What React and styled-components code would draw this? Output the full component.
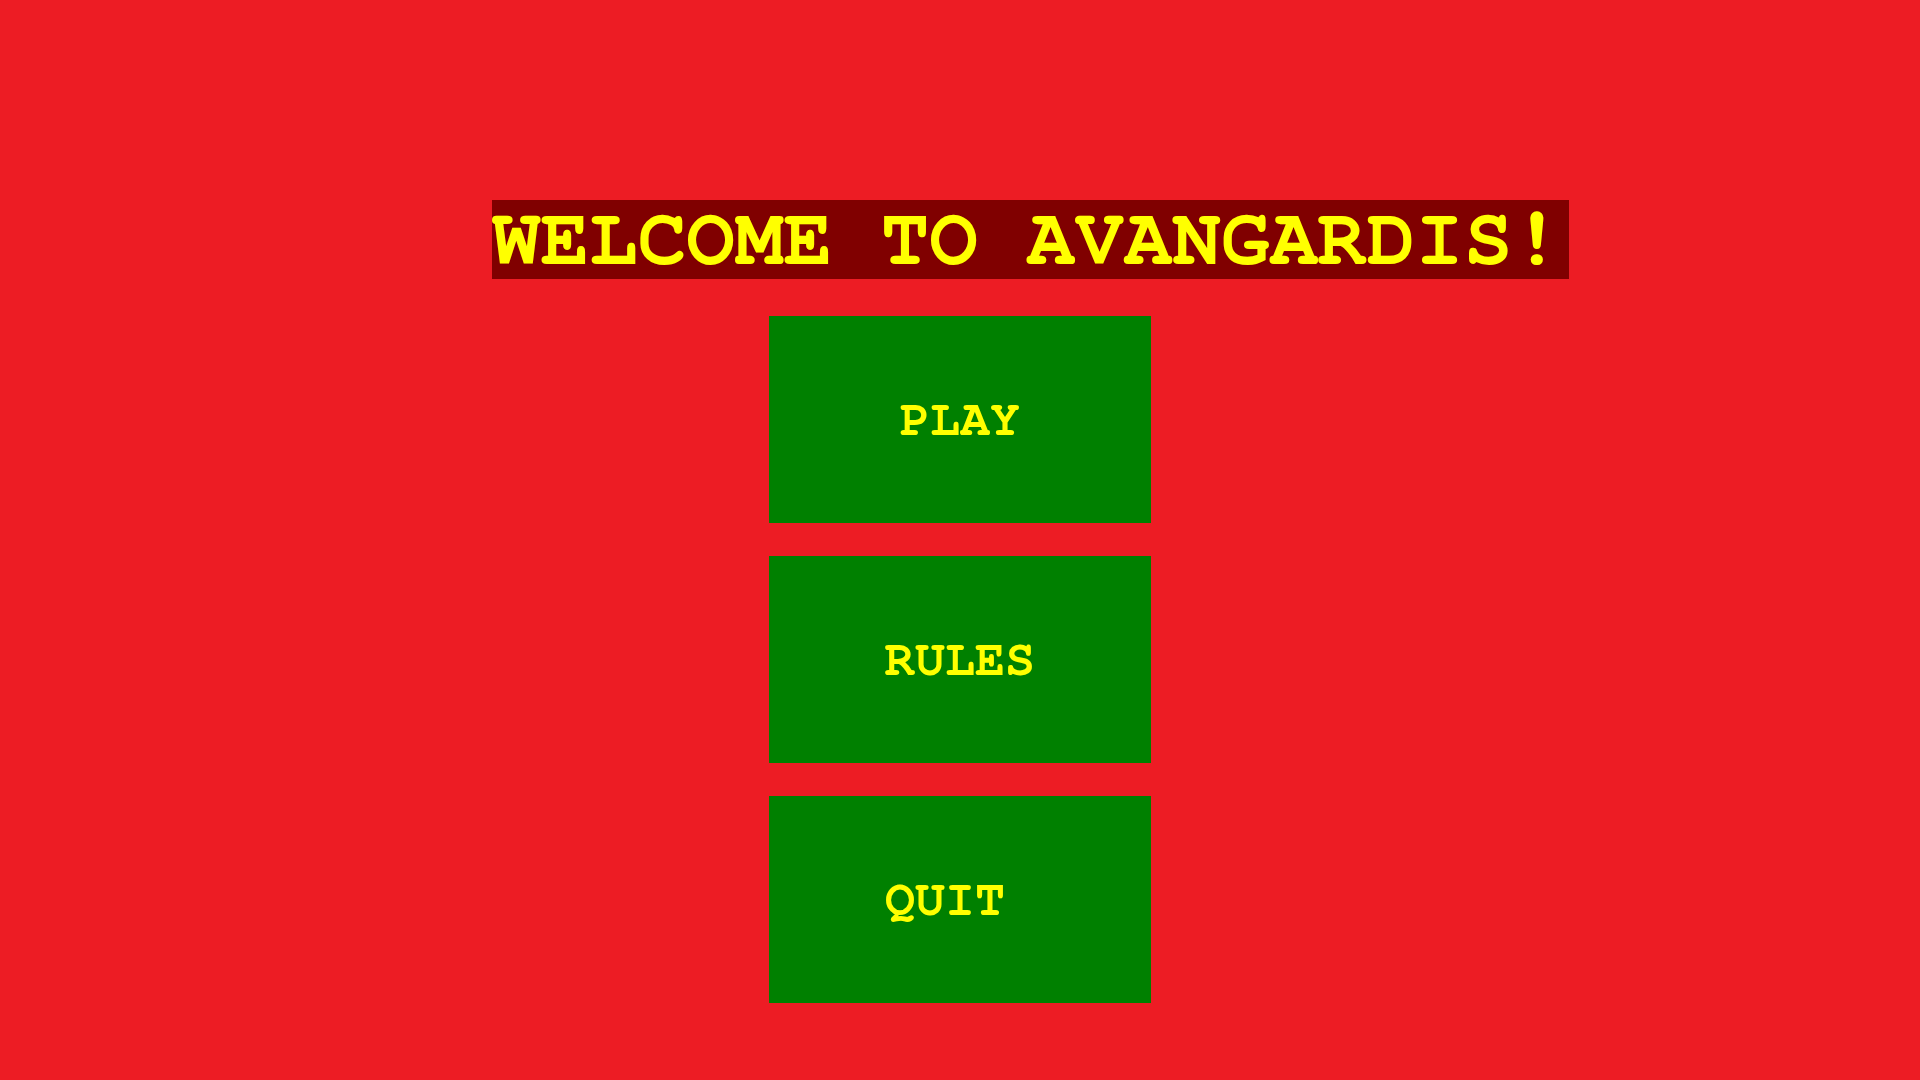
import React from "react";
import styled, { createGlobalStyle } from "styled-components";

const MONO = `"Nimbus Mono PS", "Nimbus Mono L", "FreeMono", "Courier New", "Liberation Mono", monospace`;

const Global = createGlobalStyle`
  html, body { margin: 0; padding: 0; background: #ed1c24; }
  body { font-family: ${MONO}; }
`;

const Screen = styled.main`
  width: 1920px;
  height: 1080px;
  background: #ed1c24;
  display: flex;
  flex-direction: column;
  align-items: center;
  padding-top: 200px;
  box-sizing: border-box;
`;

const Title = styled.h1`
  margin: 0 0 37px 141px;
  height: 79px;
  line-height: 79px;
  padding: 0 8px 0 0;
  background: #800000;
  color: #ffff00;
  font-family: ${MONO};
  font-weight: bold;
  font-size: 81px;
  white-space: pre;
`;

const Menu = styled.nav`
  display: flex;
  flex-direction: column;
  gap: 33px;
`;

const MenuButton = styled.button`
  width: 382px;
  height: 207px;
  border: none;
  margin: 0;
  padding: 0;
  background: #008000;
  color: #ffff00;
  font-family: ${MONO};
  font-weight: bold;
  font-size: 50px;
  white-space: pre;
  cursor: pointer;
`;

export default function App() {
  return (
    <>
      <Global />
      <Screen>
        <Title>WELCOME TO AVANGARDIS!</Title>
        <Menu>
          <MenuButton>PLAY</MenuButton>
          <MenuButton>RULES</MenuButton>
          <MenuButton>{"QUIT "}</MenuButton>
        </Menu>
      </Screen>
    </>
  );
}
